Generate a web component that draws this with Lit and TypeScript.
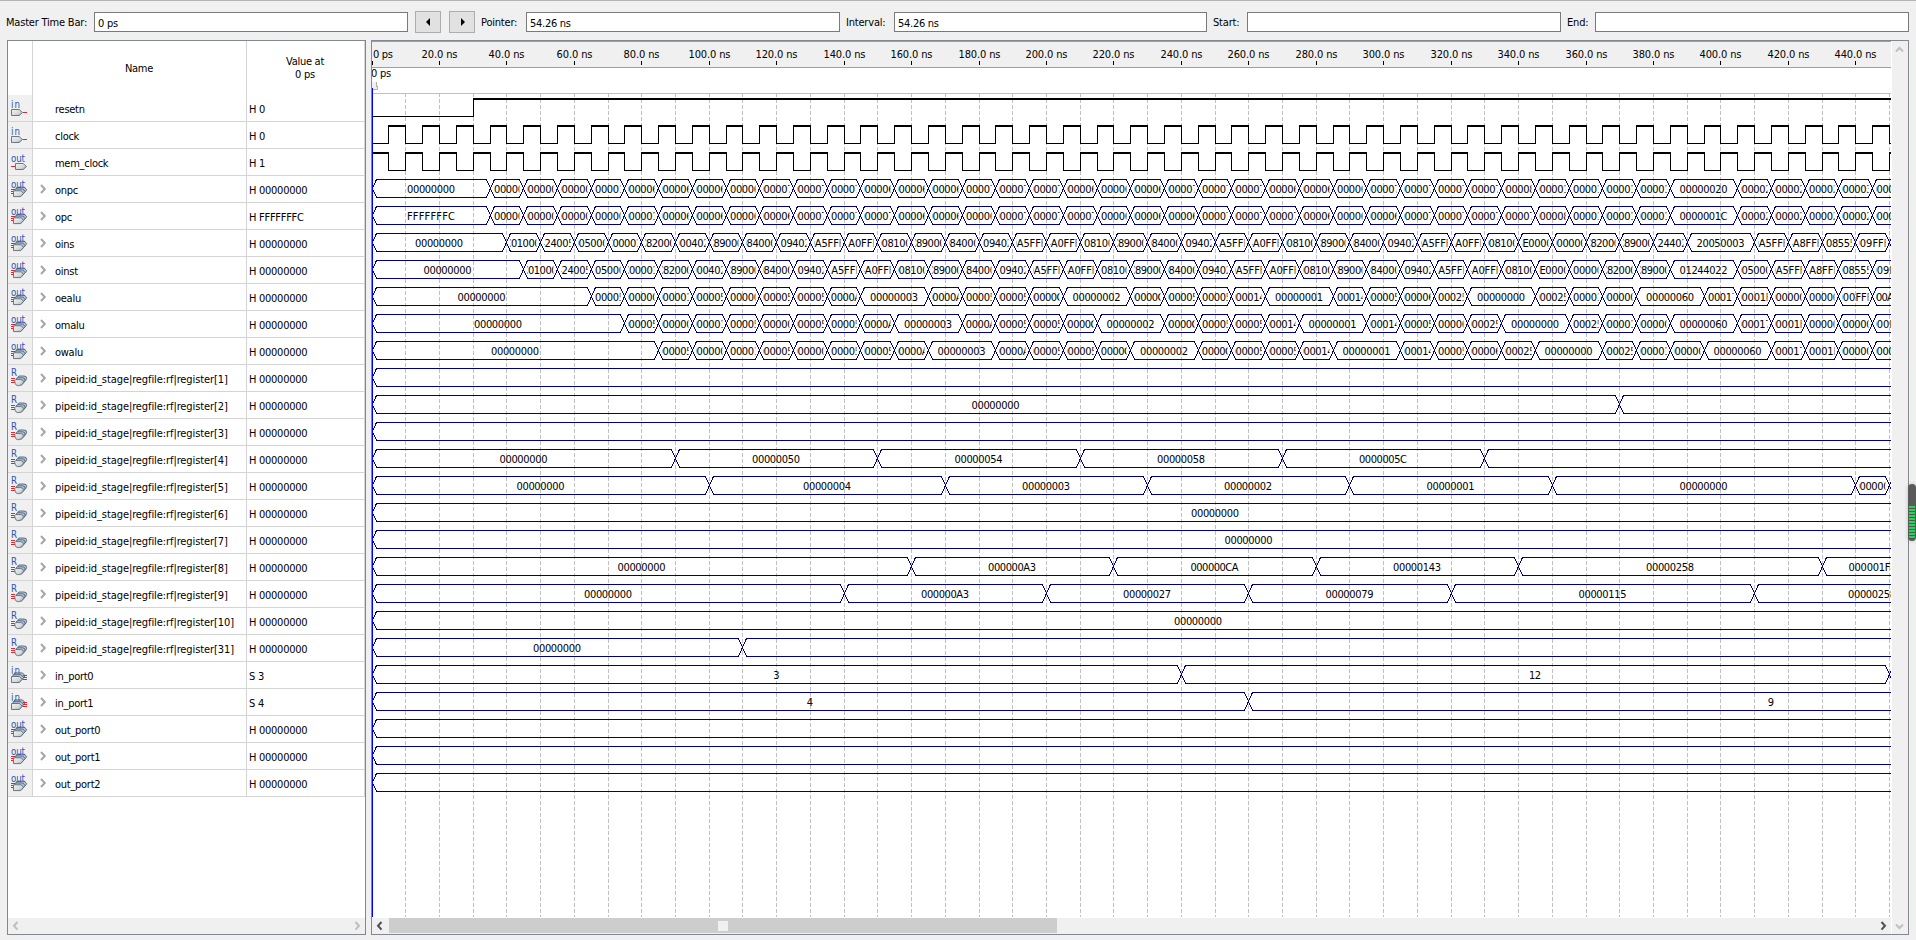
import { LitElement, html, css, svg } from "lit";
import { customElement, property } from "lit/decorators.js";

type Kind = "in" | "out" | "outbus" | "reg" | "inbus";
interface Segment { from: number; to: number; text: string }
interface Signal {
  kind: Kind;
  name: string;
  value: string;
  bus?: Segment[];
  levels?: Segment[];
}

const SCALE = 3.3723;
const ROW = 27;
const PLOT_W = 1519;
const VIEW_END = 451;
const FAR = 2000;
const px = (ns: number) => Math.floor(ns * SCALE);

/** Builds consecutive segments; "value*n" lasts n steps of 10 ns. */
function steps(firstEnd: number, first: string, list: string): Segment[] {
  const out: Segment[] = [{ from: 0, to: firstEnd, text: first }];
  let t = firstEnd;
  for (const item of list.trim().split(/\s+/)) {
    const [text, n] = item.split("*");
    const end = t + 10 * Number(n ?? 1);
    out.push({ from: t, to: end, text });
    t = end;
  }
  return out;
}

/** Builds segments from [end, text] pairs. */
function spans(...pairs: [number, string][]): Segment[] {
  let t = 0;
  return pairs.map(([to, text]) => {
    const s = { from: t, to, text };
    t = to;
    return s;
  });
}

const hex = (s: string) =>
  s.trim().split(/\s+/).map((v) => {
    const [a, n] = v.split("*");
    return a.padStart(8, "0") + (n ? "*" + n : "");
  }).join(" ");

const LOOP = "8C890000 20840004 01094020 20A5FFFF 14A0FFFB 00081000 ";
const PROGRAM = "3C010000 34240050 20050004 0C000018 AC820000 00004020 " +
  LOOP.repeat(4) + "03E00008 00000000 AC820000 8C890000 ";
const ALU = hex(
  "50 4 18 50 0 50 54 A3 3*2 A3 54 58 CA 2*2 CA 58 5C 143 1*2 143 5C 60 258 0*2 " +
  "258 18 0 60*2 173 1F8 3 2 FFFF AAAA FFFF FFFF",
);
const PC_LOOP = "64 68 6C 70 74 78 ";
const ZERO = "00000000";

function clock(startHigh: boolean): Segment[] {
  const out: Segment[] = [];
  for (let t = 0; t < VIEW_END; t += 5) {
    const high = ((t / 5) % 2 === 0) === startHigh;
    out.push({ from: t, to: t + 5, text: high ? "1" : "0" });
  }
  return out;
}

const reg = (n: number, bus: Segment[]): Signal => ({
  kind: "reg",
  name: `pipeid:id_stage|regfile:rf|register[${n}]`,
  value: "H 00000000",
  bus,
});
const outBus = (name: string, bus: Segment[], value = "H 00000000"): Signal => ({
  kind: "outbus", name, value, bus,
});
const idle = () => spans([FAR, ZERO]);

const SIGNALS: Signal[] = [
  { kind: "in", name: "resetn", value: "H 0", levels: spans([30, "0"], [FAR, "1"]) },
  { kind: "in", name: "clock", value: "H 0", levels: clock(false) },
  { kind: "out", name: "mem_clock", value: "H 1", levels: clock(true) },
  outBus("onpc", steps(35, ZERO, hex("4 8 C 10 60 " + PC_LOOP.repeat(4) + "7C 80 10 14 18 1C 20*2 24 28 2C 30 34"))),
  outBus("opc", steps(35, "FFFFFFFC", hex("0 4 8 C 10 60 " + PC_LOOP.repeat(4) + "7C 80 10 14 18 1C*2 20 24 28 2C 30")), "H FFFFFFFC"),
  outBus("oins", steps(40, ZERO, PROGRAM + "01244022 20050003*2 20A5FFFF 34A8FFFF 39085555 2009FFFF 312AFFFF")),
  outBus("oinst", steps(45, ZERO, PROGRAM + "01244022*2 20050003 20A5FFFF 34A8FFFF 39085555 2009FFFF")),
  outBus("oealu", steps(65, ZERO, ALU)),
  outBus("omalu", steps(75, ZERO, ALU)),
  outBus("owalu", steps(85, ZERO, ALU)),
  reg(1, idle()),
  reg(2, spans([370, ZERO], [FAR, "00000018"])),
  reg(3, idle()),
  reg(4, spans([90, ZERO], [150, "00000050"], [210, "00000054"], [270, "00000058"], [330, "0000005C"], [FAR, "00000060"])),
  reg(5, spans([100, ZERO], [170, "00000004"], [230, "00000003"], [290, "00000002"], [350, "00000001"], [440, ZERO], [450, "00000003"], [FAR, "00000002"])),
  reg(6, spans([500, ZERO])),
  reg(7, spans([520, ZERO])),
  reg(8, spans([160, ZERO], [220, "000000A3"], [280, "000000CA"], [340, "00000143"], [430, "00000258"], [460, "000001F8"])),
  reg(9, spans([140, ZERO], [200, "000000A3"], [260, "00000027"], [320, "00000079"], [410, "00000115"], [480, "00000258"])),
  reg(10, spans([490, ZERO])),
  reg(31, spans([110, ZERO], [FAR, "00000010"])),
  { kind: "inbus", name: "in_port0", value: "S 3", bus: spans([240, "3"], [450, "12"], [FAR, "20"]) },
  { kind: "inbus", name: "in_port1", value: "S 4", bus: spans([260, "4"], [570, "9"]) },
  outBus("out_port0", idle()),
  outBus("out_port1", idle()),
  outBus("out_port2", idle()),
];

@customElement("signal-icon")
class SignalIcon extends LitElement {
  @property() kind: Kind = "in";
  static styles = css`
    :host { display: block; width: 24px; height: 26px; }
    svg { display: block; }
    text { font: 9.7px "DejaVu Sans Condensed", "Noto Sans", sans-serif; letter-spacing: 0; fill: #2f55b5; }
    .tag { fill: url(#g); stroke: #5f6a76; stroke-width: 0.9; }
    .back { fill: #b4c4d4; stroke: #4f6478; stroke-width: 0.9; }
    .wire { stroke: #e0262c; stroke-width: 1; fill: none; shape-rendering: crispEdges; }
  `;
  private shape() {
    const lines = (x: number) => svg`<path class="wire" d="M${x} 13.5h4M${x} 15.5h4M${x} 17.5h4"/>`;
    const stack = (d: string, step = 1.6) => svg`
      <path class="back" d=${d} transform="translate(${step * 2} -3.6)"/>
      <path class="back" d=${d} transform="translate(${step} -1.8)"/>
      <path class="tag" d=${d}/>`;
    switch (this.kind) {
      case "in":
        return svg`<path class="tag" d="M3.5 14.5h7.6l3.4 3-3.4 3H3.5z"/><path class="wire" d="M14.5 17.5h4.7"/>
          <text x="3" y="13" textLength="9">in</text>`;
      case "out":
        return svg`<path class="tag" d="M7.5 14.5h7.6l3.4 3-3.4 3H7.5z"/><path class="wire" d="M3 17.5h4.2"/>
          <text x="3" y="13" textLength="14">out</text>`;
      case "outbus":
        return svg`${lines(3)}${stack("M5.5 14.8h7.8l2.2 2.6-2.7 3.2H5.5z")}
          <text x="3" y="11.5" textLength="14">out</text>`;
      case "inbus":
        return svg`${stack("M3.5 14.5h8l2.6 2.8-2.6 3.2h-8z", 1.5)}${lines(15.3)}
          <text x="3" y="11.5" textLength="9">in</text>`;
      default:
        return svg`${lines(3)}${stack("M7.6 14.6h5.2q3 0 2.6 2.6-.5 3.3-4 3.4h-1.9q-1.6 0-2.3-2.3-1.4-3.2.4-3.7z")}
          <text x="3" y="11">R</text>`;
    }
  }
  render() {
    return html`<svg width="24" height="26" viewBox="0 0 24 26">
      <defs><linearGradient id="g" x1="0" y1="0" x2="1" y2="1">
        <stop offset="0" stop-color="#f4f4f0"/><stop offset=".6" stop-color="#d5d9dc"/><stop offset="1" stop-color="#8fa2b5"/>
      </linearGradient></defs>${this.shape()}</svg>`;
  }
}

@customElement("wave-plot")
class WavePlot extends LitElement {
  static styles = css`
    :host { display: block; }
    svg { display: block; shape-rendering: crispEdges; }
    text { font: 11px "DejaVu Sans Condensed", "Noto Sans", sans-serif; letter-spacing: 0; fill: #000; text-anchor: middle; }
    .grid { stroke: #c0c0c0; stroke-dasharray: 4 2; }
    .bus { stroke: #000080; fill: none; }
    .level { fill: #000; }
  `;
  private busRow(sig: Signal, row: number) {
    const top = row * ROW + 4.5;
    const mid = top + 9;
    const bot = top + 18;
    return (sig.bus ?? []).filter((s) => s.from < VIEW_END).map((s, i) => {
      const a = px(s.from) + 0.5;
      const b = px(s.to) + 0.5;
      const id = `c${row}-${i}`;
      // A slot narrower than its value only has room for the middle digits.
      const narrow = b - a < 40 && s.text.length === 8;
      const label = narrow ? s.text.slice(1, 7) : s.text;
      const mid2 = (a + b) / 2 - (narrow ? 1 : 0.5);
      const w = label.length * 6;
      return svg`
        <path class="bus" d="M${a} ${mid}L${a + 4} ${top}H${b - 4}L${b} ${mid}M${a} ${mid}L${a + 4} ${bot}H${b - 4}L${b} ${mid}"/>
        ${mid2 - w / 2 < PLOT_W
          ? svg`<clipPath id=${id}><rect x=${a + 3.5} y=${top} width=${b - a - 7.5} height="18"/></clipPath>
              <text clip-path="url(#${id})" x=${mid2} y=${top + 13.5} textLength=${w}>${label}</text>`
          : ""}`;
    });
  }
  private levelRow(sig: Signal, row: number) {
    const top = row * ROW + 4;
    let prev = "";
    return (sig.levels ?? []).map((s) => {
      const a = px(s.from);
      const b = Math.min(px(s.to), PLOT_W);
      const edge = prev && prev !== s.text
        ? svg`<rect class="level" x=${a} y=${top} width="1" height="19"/>` : "";
      prev = s.text;
      return svg`${edge}<rect class="level" x=${a} y=${s.text === "1" ? top : top + 18}
        width=${Math.max(b - a, 0)} height=${s.text === "1" ? 2 : 1}/>`;
    });
  }
  render() {
    const grid = [];
    for (let t = 10; t <= 450; t += 10) {
      grid.push(svg`<path class="grid" d="M${px(t) + 0.5} -1V823"/>`);
    }
    return html`<svg width=${PLOT_W} height="824" viewBox="0 0 ${PLOT_W} 824">
      ${grid}
      ${SIGNALS.map((s, r) => (s.levels ? this.levelRow(s, r) : this.busRow(s, r)))}
    </svg>`;
  }
}

const chevron = (cls: string, d: string) =>
  html`<svg class="chev ${cls}" width="16" height="16" viewBox="0 0 16 16"><path d=${d}/></svg>`;
const LEFT = "M9.5 4L6 7.8l3.5 3.8";
const RIGHT = "M6.5 4L10 7.8l-3.5 3.8";

@customElement("app-root")
class AppRoot extends LitElement {
  static styles = css`
    :host {
      display: flex; flex-direction: column; box-sizing: border-box; position: relative;
      width: 1916px; height: 940px; background: #f0f0f0; border-top: 1px solid #b4b4b4; overflow: hidden;
      font: 11px/13px "DejaVu Sans Condensed", "Noto Sans", sans-serif; letter-spacing: -0.27px; color: #000;
    }
    * { box-sizing: border-box; }
    svg { display: block; }
    .bar {
      display: grid; align-items: center; height: 39px; flex: none; padding: 5px 0 3px 6px;
      grid-template-columns: 88px 314px 7px 26px 8px 26px 6px 45px 314px 6px 48px 313px 6px 34px 314px 6px 28px 314px;
    }
    .bar label { white-space: nowrap; letter-spacing: -0.2px; padding-top: 1px; }
    .field { height: 20px; border: 1px solid #7a7a7a; background: #fff; padding: 4px 3px 0; }
    .step { height: 22px; background: #e1e1e1; border: 1px solid #adadad; display: grid; place-items: center; }
    .main { display: flex; gap: 5px; padding-left: 7px; height: 895px; }
    .panel { border: 1px solid #828790; background: #fff; display: flex; flex-direction: column; }
    .list { width: 359px; }
    .grid { flex: 1; min-height: 0; }
    .line { display: grid; grid-template-columns: 25px 214px 118px; }
    .head { height: 54px; text-align: center; }
    .head > div, .row > div { border-right: 1px solid #d4d4d4; display: flex; align-items: center; }
    .head > div { justify-content: center; padding-right: 1px; }
    .row { height: 27px; }
    .row > div { border-bottom: 1px solid #d4d4d4; white-space: pre; }
    .row > .icon { background: #f0f0f0; }
    .row > .name { padding-left: 5px; }
    .row > .value { padding-left: 2px; }
    .name span, .value span { padding-top: 3px; }
    .name .twist { width: 17px; padding: 0; }
    .long { letter-spacing: -0.09px; }
    .hbar { height: 16px; background: #f0f0f0; display: flex; justify-content: space-between; flex: none; }
    .chev path { fill: none; stroke: #505050; stroke-width: 2; }
    .chev.off path { stroke: #bfbfbf; }
    .chev.tree path { stroke: #a6a6a6; }
    .wave { width: 1538px; flex-direction: row; }
    .view { width: 1519px; display: flex; flex-direction: column; position: relative; }
    .ruler { height: 27px; background: #f0f0f0; border-top: 1px solid #a0a0a0; border-bottom: 1px solid #a0a0a0; }
    .track { height: 26px; border-bottom: 1px solid #c0c0c0; }
    .ruler text { letter-spacing: 0; }
    .cursor { position: absolute; left: 0; top: 47px; width: 1px; height: 829px; background: #00f; }
    .thumb { width: 668px; margin-left: 1px; background: #cdcdcd; height: 15px; display: grid; place-items: center; }
    .grip { width: 10px; height: 10px; background: #f0f0f0; }
    .hscroll { justify-content: flex-start; }
    .hscroll .last { margin-left: auto; }
    .vbar { width: 16px; margin-left: 1px; background: #f0f0f0; display: flex; flex-direction: column; justify-content: space-between; }
    .meter {
      position: absolute; right: 0; top: 483px; width: 8px; height: 57px; border-radius: 4px;
      background: #5a5a5a; padding: 22px 1px 2px; box-shadow: 0 0 4px #0003;
    }
    .stripes { height: 33px; border-radius: 0 0 3px 3px; background: repeating-linear-gradient(#2fcf5f 0 1px, #2fcf5f 1px 2px, #4a5a4e 2px 3px); }
  `;
  render() {
    const ticks = [];
    for (let t = 0; t <= 440; t += 20) ticks.push(t);
    return html`
      <div class="bar">
        <label>Master Time Bar:</label><div class="field">0 ps</div><i></i>
        <div class="step"><svg width="4" height="8"><path d="M4 0v8L0 4z"/></svg></div><i></i>
        <div class="step"><svg width="5" height="8"><path d="M1 0v8l4-4z"/></svg></div><i></i>
        <label>Pointer:</label><div class="field">54.26 ns</div><i></i>
        <label>Interval:</label><div class="field">54.26 ns</div><i></i>
        <label>Start:</label><div class="field"></div><i></i>
        <label>End:</label><div class="field"></div>
      </div>
      <div class="main">
        <div class="panel list">
          <div class="grid">
            <div class="line head"><div></div><div class="name">Name</div><div class="value">Value at<br>0 ps</div></div>
            ${SIGNALS.map((s) => html`
              <div class="line row">
                <div class="icon"><signal-icon .kind=${s.kind}></signal-icon></div>
                <div class="name"><div class="twist">${s.bus ? chevron("tree", "M3 4l3.8 4L3 12") : ""}</div><span class=${s.kind === "reg" ? "long" : ""}>${s.name}</span></div>
                <div class="value"><span>${s.value}</span></div>
              </div>`)}
          </div>
          <div class="hbar">${chevron("off", LEFT)}${chevron("off", RIGHT)}</div>
        </div>
        <div class="panel wave">
          <div class="view">
            <div class="ruler"><svg width="1519" height="25">
              ${ticks.map((t) => {
                const x = px(t);
                return svg`<rect x=${x} y="19" width="1" height="4"/>
                  ${t === 0
                    ? svg`<text x="1" y="16" textLength="20">0 ps</text>`
                    : svg`<text x=${x + 0.5} y="16" text-anchor="middle" textLength=${t < 100 ? 36 : 42}>${t}.0 ns</text>`}`;
              })}
            </svg></div>
            <div class="track"><svg width="60" height="25">
              <text x="-1" y="9" textLength="20">0 ps</text>
              <path d="M0 14h4v4h1v4H0z" fill="#f0f0f0"/><path d="M4.5 14v5M5.5 18v3.5H1" fill="none" stroke="#b0b0b0"/>
            </svg></div>
            <wave-plot></wave-plot>
            <div class="hbar hscroll">${chevron("", LEFT)}<div class="thumb"><div class="grip"></div></div><div class="last">${chevron("", RIGHT)}</div></div>
            <div class="cursor"></div>
          </div>
          <div class="vbar">${chevron("off", "M4 10.5L7.5 7l3.5 3.5")}${chevron("off", "M4 6.5L7.5 10 11 6.5")}</div>
        </div>
      </div>
      <div class="meter"><div class="stripes"></div></div>
    `;
  }
}
